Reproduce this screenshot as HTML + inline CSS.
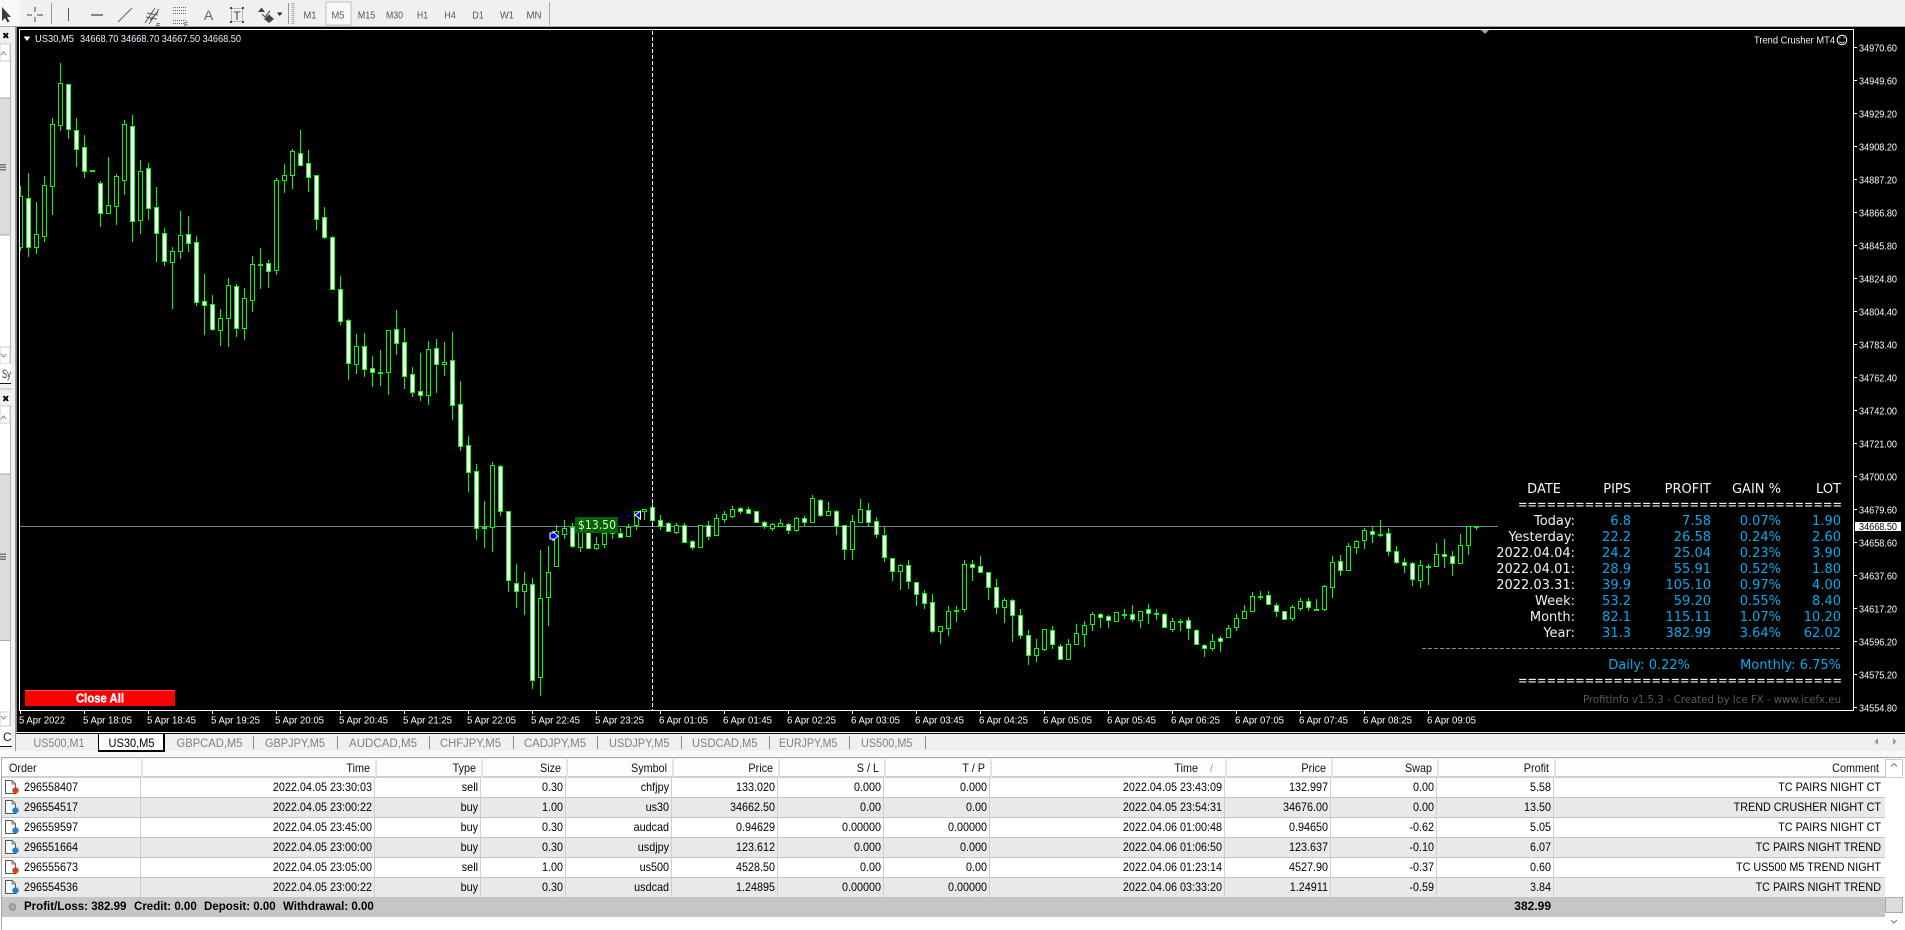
<!DOCTYPE html>
<html><head><meta charset="utf-8"><title>MT4</title>
<style>
html,body{margin:0;padding:0;background:#fff;width:1905px;height:930px;overflow:hidden}
body{position:relative;font-family:"Liberation Sans",Arial,sans-serif}
svg{position:absolute;left:0;top:0}
svg text{font-family:"Liberation Sans",Arial,sans-serif}
.p text{font-family:"DejaVu Sans",Verdana,sans-serif;font-size:13px}
.r{position:absolute;left:2px;width:1883px;height:20px;box-sizing:border-box;border-bottom:1px solid #c4c4c4;font-size:12px;color:#000}
.r.o{background:#e9e9e9}
.r i{position:absolute;top:0;height:19px;width:1px;background:#cfcfcf}
.r b{position:absolute;top:0;font-weight:400;line-height:19px;white-space:nowrap;text-align:right;left:0;transform:scaleX(.9);transform-origin:100% 50%}
.h{top:759px;height:19px;background:#fdfdfd;border-bottom:2px solid #d0d0d0;color:#111}
.h i{width:2px;background:#e4e4e4;height:18px}
.c0{left:22px!important;text-align:left!important;transform-origin:0 50%!important}
.c1{width:370px}.c2{width:476px}.c3{width:561px}.c4{width:667px}.c5{width:773px}.c6{width:879px}.c7{width:985px}.c8{width:1220px}.c9{width:1326px}.c10{width:1432px}.c11{width:1549px}.c12{width:1879px}
.h b{margin-left:-2px}
.h .c0{left:6.5px!important;margin-left:0}
.t b{font-weight:700;text-align:left;transform:scaleX(.96);transform-origin:0 50%}
</style></head><body>
<svg width="1905" height="930" viewBox="0 0 1905 930" shape-rendering="crispEdges">
<rect width="1905" height="27" fill="#f0f0f0"/>
<rect y="26" width="1905" height="1" fill="#a8a8a8"/>
<rect x="0" y="0" width="20" height="26" fill="#f8f8f8"/>
<rect x="326" y="2" width="25" height="23" fill="#f9f9f9" stroke="#c0c0c0"/>
<g shape-rendering="auto">
<path d="M2 7L2 21L5 18L7.5 22.5L9.5 21.5L7 17L11 17Z" fill="#3c3c3c"/>
<g shape-rendering="crispEdges"><path d="M27 15H32M37 15H43M35 7V12M35 17V22" stroke="#444" fill="none"/></g>
<path d="M51.5 3V24" stroke="#999"/>
<path d="M68.5 8V21" stroke="#555"/>
<path d="M91 15H103" stroke="#444" stroke-width="1.2"/>
<path d="M118 22L132 8" stroke="#777" stroke-width="1.2"/>
<path d="M145 23L155 8M149 24L159 9M146 17L157 19M147 13L158 15M150 20L158 12" stroke="#555" fill="none"/>
<text x="156" y="28" font-size="7" fill="#444">E</text>
<path d="M173 7.5H187M173 10.5H187M173 13.5H187M173 20.5H187M173 23.5H184" stroke="#666" stroke-dasharray="1 1" fill="none"/>
<text x="184" y="27" font-size="7" fill="#444">F</text>
<text x="208.5" y="20" font-size="14" fill="#666" text-anchor="middle">A</text>
<rect x="231.5" y="8.5" width="11" height="13" fill="none" stroke="#777" stroke-dasharray="1 1"/>
<path d="M230 7h2v2h-2zM242 7h2v2h-2zM230 21h2v2h-2zM242 21h2v2h-2z" fill="#444"/>
<text x="237" y="20" font-size="12" fill="#444" text-anchor="middle">T</text>
<path d="M258 12L261.5 7.500L265 12Z" fill="#444"/>
<path d="M262 14L265 17L270 11" stroke="#555" fill="none" stroke-width="1.2"/>
<path d="M264 21L269 16.500L274 21L269 25Z" fill="#444" transform="translate(0,-2)"/>
<path d="M277 12.500H282.500L279.700 16Z" fill="#222"/>
<path d="M288.500 3V24" stroke="#999"/>
<path d="M293 3V24" stroke="#aaa" stroke-width="3" stroke-dasharray="1 1"/>
<path d="M549.500 2V25" stroke="#aaa"/>
</g>
<g fill="#555" font-size="10.5" text-anchor="middle" lengthAdjust="spacingAndGlyphs" shape-rendering="auto">
<text x="310" y="18.500" textLength="13" lengthAdjust="spacingAndGlyphs">M1</text>
<text x="338" y="18.500" textLength="13" lengthAdjust="spacingAndGlyphs">M5</text>
<text x="366.500" y="18.500" textLength="17.500" lengthAdjust="spacingAndGlyphs">M15</text>
<text x="394.500" y="18.500" textLength="17" lengthAdjust="spacingAndGlyphs">M30</text>
<text x="422.500" y="18.500" textLength="11" lengthAdjust="spacingAndGlyphs">H1</text>
<text x="450" y="18.500" textLength="11.500" lengthAdjust="spacingAndGlyphs">H4</text>
<text x="478" y="18.500" textLength="11.500" lengthAdjust="spacingAndGlyphs">D1</text>
<text x="507" y="18.500" textLength="14" lengthAdjust="spacingAndGlyphs">W1</text>
<text x="534" y="18.500" textLength="15" lengthAdjust="spacingAndGlyphs">MN</text>
</g>

<!-- sidebar -->
<rect y="27" width="17" height="723" fill="#f0f0f0"/>
<rect x="0" y="44" width="10" height="320" fill="#fff"/>
<rect x="10" y="44" width="1" height="320" fill="#b5b5b5"/>
<rect x="0" y="44" width="10" height="17" fill="#fff" stroke="#ccc" stroke-width="1"/>
<rect x="0" y="98" width="10" height="137" fill="#dcdcdc"/>
<path d="M0 98H10M0 235H10" stroke="#aaa"/>
<path d="M0 164.500H6M0 167H6M0 169.500H6" stroke="#777" stroke-width="1.500"/>
<rect x="0" y="347" width="10" height="17" fill="#fff" stroke="#ccc"/>
<path d="M1 55L3.500 52L6 55" stroke="#888" fill="none"/>
<path d="M1 354L3.500 357L6 354" stroke="#888" fill="none"/>
<path d="M3.500 33L8 38M8 33L3.500 38" stroke="#111" stroke-width="2"/>
<rect x="0" y="364" width="11" height="19" fill="#fff"/>
<text x="2" y="378" font-size="12" fill="#335" textLength="9" lengthAdjust="spacingAndGlyphs" shape-rendering="auto">Sy</text>
<rect x="0" y="383" width="11" height="1" fill="#111"/>
<path d="M0 389H12" stroke="#bbb"/>
<path d="M3.500 396L8 401M8 396L3.500 401" stroke="#111" stroke-width="2"/>
<path d="M0 406H12" stroke="#bbb"/>
<rect x="0" y="406" width="10" height="320" fill="#fff"/>
<rect x="10" y="406" width="1" height="320" fill="#b5b5b5"/>
<rect x="0" y="406" width="10" height="17" fill="#fff" stroke="#ccc"/>
<path d="M1 419L3.500 416L6 419" stroke="#888" fill="none"/>
<rect x="0" y="474" width="10" height="167" fill="#dcdcdc"/>
<path d="M0 474H10M0 640.500H10" stroke="#aaa"/>
<path d="M0 554H6M0 556.500H6M0 559H6" stroke="#777" stroke-width="1.500"/>
<rect x="0" y="712" width="10" height="14" fill="#fff" stroke="#ccc"/>
<path d="M1 716L3.500 719L6 716" stroke="#888" fill="none"/>
<rect x="0" y="727" width="11" height="20" fill="#fff"/>
<text x="3" y="741" font-size="12" fill="#222" shape-rendering="auto">C</text>
<rect x="0" y="746" width="12" height="1" fill="#111"/>
<rect x="15" y="27" width="1" height="725" fill="#999"/>

<!-- chart -->
<rect x="16" y="27" width="1889" height="707" fill="#000"/>
<rect y="27" x="16" width="1" height="707" fill="#888"/>
<rect x="19" y="29" width="1835" height="682" fill="#fff"/>
<rect x="20" y="30" width="1833" height="680" fill="#000"/>
<rect x="16" y="732" width="1889" height="1" fill="#fff"/>
<clipPath id="cp"><rect x="20" y="30" width="1478" height="680"/></clipPath>
<rect x="20" y="526" width="1478" height="1" fill="#708090"/>
<g id="cs" clip-path="url(#cp)"><path id="w" fill="#00ff00"/><path id="f" fill="#fff"/><path id="k" fill="#000"/></g>
<path d="M652.500 31V710" stroke="#fff" stroke-dasharray="4 2" fill="none"/>
<path d="M1481 30H1489L1485 34Z" fill="#8aa0c0" shape-rendering="auto"/>

<!-- price axis -->
<path id="ticks" fill="#fff" d="M1854 47h3v1h-3zM1854 80h3v1h-3zM1854 113h3v1h-3zM1854 146h3v1h-3zM1854 179h3v1h-3zM1854 212h3v1h-3zM1854 245h3v1h-3zM1854 278h3v1h-3zM1854 311h3v1h-3zM1854 344h3v1h-3zM1854 377h3v1h-3zM1854 410h3v1h-3zM1854 443h3v1h-3zM1854 476h3v1h-3zM1854 509h3v1h-3zM1854 542h3v1h-3zM1854 575h3v1h-3zM1854 608h3v1h-3zM1854 641h3v1h-3zM1854 674h3v1h-3zM1854 707h3v1h-3zM20 710h1v4h-1zM84 710h1v4h-1zM148 710h1v4h-1zM212 710h1v4h-1zM276 710h1v4h-1zM340 710h1v4h-1zM404 710h1v4h-1zM468 710h1v4h-1zM532 710h1v4h-1zM596 710h1v4h-1zM660 710h1v4h-1zM724 710h1v4h-1zM788 710h1v4h-1zM852 710h1v4h-1zM916 710h1v4h-1zM980 710h1v4h-1zM1044 710h1v4h-1zM1108 710h1v4h-1zM1172 710h1v4h-1zM1236 710h1v4h-1zM1300 710h1v4h-1zM1364 710h1v4h-1zM1428 710h1v4h-1z"/>
<g fill="#fff" font-size="10.500" shape-rendering="auto">
<text x="1859" y="51.500" textLength="38" lengthAdjust="spacingAndGlyphs">34970.60</text>
<text x="1859" y="84.500" textLength="38" lengthAdjust="spacingAndGlyphs">34949.60</text>
<text x="1859" y="117.500" textLength="38" lengthAdjust="spacingAndGlyphs">34929.20</text>
<text x="1859" y="150.500" textLength="38" lengthAdjust="spacingAndGlyphs">34908.20</text>
<text x="1859" y="183.500" textLength="38" lengthAdjust="spacingAndGlyphs">34887.20</text>
<text x="1859" y="216.500" textLength="38" lengthAdjust="spacingAndGlyphs">34866.80</text>
<text x="1859" y="249.500" textLength="38" lengthAdjust="spacingAndGlyphs">34845.80</text>
<text x="1859" y="282.500" textLength="38" lengthAdjust="spacingAndGlyphs">34824.80</text>
<text x="1859" y="315.500" textLength="38" lengthAdjust="spacingAndGlyphs">34804.40</text>
<text x="1859" y="348.500" textLength="38" lengthAdjust="spacingAndGlyphs">34783.40</text>
<text x="1859" y="381.500" textLength="38" lengthAdjust="spacingAndGlyphs">34762.40</text>
<text x="1859" y="414.500" textLength="38" lengthAdjust="spacingAndGlyphs">34742.00</text>
<text x="1859" y="447.500" textLength="38" lengthAdjust="spacingAndGlyphs">34721.00</text>
<text x="1859" y="480.500" textLength="38" lengthAdjust="spacingAndGlyphs">34700.00</text>
<text x="1859" y="513.500" textLength="38" lengthAdjust="spacingAndGlyphs">34679.60</text>
<text x="1859" y="546.500" textLength="38" lengthAdjust="spacingAndGlyphs">34658.60</text>
<text x="1859" y="579.500" textLength="38" lengthAdjust="spacingAndGlyphs">34637.60</text>
<text x="1859" y="612.500" textLength="38" lengthAdjust="spacingAndGlyphs">34617.20</text>
<text x="1859" y="645.500" textLength="38" lengthAdjust="spacingAndGlyphs">34596.20</text>
<text x="1859" y="678.500" textLength="38" lengthAdjust="spacingAndGlyphs">34575.20</text>
<text x="1859" y="711.500" textLength="38" lengthAdjust="spacingAndGlyphs">34554.80</text>
</g>
<rect x="1855" y="522" width="46" height="9" fill="#fff"/>
<text x="1859" y="530" font-size="10.500" fill="#000" textLength="38" lengthAdjust="spacingAndGlyphs" shape-rendering="auto">34668.50</text>

<!-- time axis -->
<g fill="#fff" font-size="10.500" shape-rendering="auto">
<text x="19" y="723.500" textLength="46" lengthAdjust="spacingAndGlyphs">5 Apr 2022</text>
<text x="83" y="723.500" textLength="49" lengthAdjust="spacingAndGlyphs">5 Apr 18:05</text>
<text x="147" y="723.500" textLength="49" lengthAdjust="spacingAndGlyphs">5 Apr 18:45</text>
<text x="211" y="723.500" textLength="49" lengthAdjust="spacingAndGlyphs">5 Apr 19:25</text>
<text x="275" y="723.500" textLength="49" lengthAdjust="spacingAndGlyphs">5 Apr 20:05</text>
<text x="339" y="723.500" textLength="49" lengthAdjust="spacingAndGlyphs">5 Apr 20:45</text>
<text x="403" y="723.500" textLength="49" lengthAdjust="spacingAndGlyphs">5 Apr 21:25</text>
<text x="467" y="723.500" textLength="49" lengthAdjust="spacingAndGlyphs">5 Apr 22:05</text>
<text x="531" y="723.500" textLength="49" lengthAdjust="spacingAndGlyphs">5 Apr 22:45</text>
<text x="595" y="723.500" textLength="49" lengthAdjust="spacingAndGlyphs">5 Apr 23:25</text>
<text x="659" y="723.500" textLength="49" lengthAdjust="spacingAndGlyphs">6 Apr 01:05</text>
<text x="723" y="723.500" textLength="49" lengthAdjust="spacingAndGlyphs">6 Apr 01:45</text>
<text x="787" y="723.500" textLength="49" lengthAdjust="spacingAndGlyphs">6 Apr 02:25</text>
<text x="851" y="723.500" textLength="49" lengthAdjust="spacingAndGlyphs">6 Apr 03:05</text>
<text x="915" y="723.500" textLength="49" lengthAdjust="spacingAndGlyphs">6 Apr 03:45</text>
<text x="979" y="723.500" textLength="49" lengthAdjust="spacingAndGlyphs">6 Apr 04:25</text>
<text x="1043" y="723.500" textLength="49" lengthAdjust="spacingAndGlyphs">6 Apr 05:05</text>
<text x="1107" y="723.500" textLength="49" lengthAdjust="spacingAndGlyphs">6 Apr 05:45</text>
<text x="1171" y="723.500" textLength="49" lengthAdjust="spacingAndGlyphs">6 Apr 06:25</text>
<text x="1235" y="723.500" textLength="49" lengthAdjust="spacingAndGlyphs">6 Apr 07:05</text>
<text x="1299" y="723.500" textLength="49" lengthAdjust="spacingAndGlyphs">6 Apr 07:45</text>
<text x="1363" y="723.500" textLength="49" lengthAdjust="spacingAndGlyphs">6 Apr 08:25</text>
<text x="1427" y="723.500" textLength="49" lengthAdjust="spacingAndGlyphs">6 Apr 09:05</text>
</g>

<!-- chart header -->
<path d="M23.500 36.500H30.500L27 41Z" fill="#fff" shape-rendering="auto"/>
<g fill="#eaf4ff" font-size="10.500" shape-rendering="auto">
<text x="35" y="42" textLength="39" lengthAdjust="spacingAndGlyphs">US30,M5</text>
<text x="80" y="42" textLength="161" lengthAdjust="spacingAndGlyphs">34668.70 34668.70 34667.50 34668.50</text>
<text x="1754" y="43.500" textLength="81" lengthAdjust="spacingAndGlyphs">Trend Crusher MT4</text>
</g>
<g fill="none" stroke="#fff" shape-rendering="auto"><circle cx="1842" cy="40" r="4.800"/><path d="M1839.500 41.500Q1842 44.500 1844.500 41.500" stroke-width=".9"/></g>
<rect x="1839.500" y="37.500" width="1.200" height="1.200" fill="#fff"/><rect x="1843.300" y="37.500" width="1.200" height="1.200" fill="#fff"/>

<!-- trade marks -->
<path d="M557 535L635 514" stroke="#0000ff" stroke-dasharray="4 5" shape-rendering="auto"/>
<rect x="575" y="517" width="43" height="16" fill="#006400"/>
<text x="578" y="529" font-size="12.500" fill="#e6ecd8" textLength="38" lengthAdjust="spacingAndGlyphs" style="font-family:'DejaVu Sans',sans-serif" shape-rendering="auto">$13.50</text>
<path d="M550 533H553V531.500L558 536L553 540.500V539H550Z" fill="#0000ff" stroke="#fff" stroke-width="1" shape-rendering="auto"/>
<path d="M640.500 511V519L635 515Z" fill="#0000ff" stroke="#fff" stroke-width="1" shape-rendering="auto"/>

<!-- close all -->
<rect x="25" y="690" width="150" height="16" fill="#ff0000"/>
<rect x="25" y="690" width="150" height="1" fill="#ff5050"/>
<text x="76" y="702.500" font-size="12.500" font-weight="700" fill="#fff" stroke="#fff" stroke-width=".35" textLength="48" lengthAdjust="spacingAndGlyphs" shape-rendering="auto">Close All</text>

<!-- profit panel -->
<g class="p" shape-rendering="auto" text-anchor="end">
<g fill="#f4f4f4">
<text x="1561" y="493">DATE</text><text x="1631" y="493">PIPS</text><text x="1711" y="493">PROFIT</text><text x="1781" y="493">GAIN %</text><text x="1841" y="493">LOT</text>
<text x="1842" y="509" textLength="324" lengthAdjust="spacingAndGlyphs">==================================</text>
<text x="1575" y="525">Today:</text><text x="1575" y="541">Yesterday:</text><text x="1575" y="557">2022.04.04:</text><text x="1575" y="573">2022.04.01:</text><text x="1575" y="589">2022.03.31:</text><text x="1575" y="605">Week:</text><text x="1575" y="621">Month:</text><text x="1575" y="637">Year:</text>
<text x="1842" y="685" textLength="324" lengthAdjust="spacingAndGlyphs">==================================</text>
</g>
<g fill="#00aeef">
<text x="1631" y="525">6.8</text><text x="1711" y="525">7.58</text><text x="1781" y="525">0.07%</text><text x="1841" y="525">1.90</text>
<text x="1631" y="541">22.2</text><text x="1711" y="541">26.58</text><text x="1781" y="541">0.24%</text><text x="1841" y="541">2.60</text>
<text x="1631" y="557">24.2</text><text x="1711" y="557">25.04</text><text x="1781" y="557">0.23%</text><text x="1841" y="557">3.90</text>
<text x="1631" y="573">28.9</text><text x="1711" y="573">55.91</text><text x="1781" y="573">0.52%</text><text x="1841" y="573">1.80</text>
<text x="1631" y="589">39.9</text><text x="1711" y="589">105.10</text><text x="1781" y="589">0.97%</text><text x="1841" y="589">4.00</text>
<text x="1631" y="605">53.2</text><text x="1711" y="605">59.20</text><text x="1781" y="605">0.55%</text><text x="1841" y="605">8.40</text>
<text x="1631" y="621">82.1</text><text x="1711" y="621">115.11</text><text x="1781" y="621">1.07%</text><text x="1841" y="621">10.20</text>
<text x="1631" y="637">31.3</text><text x="1711" y="637">382.99</text><text x="1781" y="637">3.64%</text><text x="1841" y="637">62.02</text>
<text x="1690" y="669">Daily: 0.22%</text><text x="1841" y="669">Monthly: 6.75%</text>
</g>
<text x="1841" y="703" fill="#5a5a5a" style="font-size:11px" textLength="258" lengthAdjust="spacingAndGlyphs">ProfitInfo v1.5.3 - Created by Ice FX - www.icefx.eu</text>
</g>
<path d="M1422 648.500H1840" stroke="#888" stroke-dasharray="4 2"/>

<!-- tabs -->
<rect x="16" y="734" width="1889" height="17" fill="#f0f0f0"/>
<rect x="2" y="751" width="1903" height="6" fill="#f8f8f8"/>
<rect x="98" y="733" width="67" height="19" fill="#000"/>
<rect x="99" y="734" width="64" height="16" fill="#fff"/>
<g fill="#808080" font-size="12" shape-rendering="auto">
<text x="33.500" y="747" textLength="51" lengthAdjust="spacingAndGlyphs">US500,M1</text>
<text x="108.500" y="747" textLength="46" lengthAdjust="spacingAndGlyphs" fill="#000">US30,M5</text>
<text x="176.500" y="747" textLength="66" lengthAdjust="spacingAndGlyphs">GBPCAD,M5</text>
<text x="265" y="747" textLength="60" lengthAdjust="spacingAndGlyphs">GBPJPY,M5</text>
<text x="349" y="747" textLength="68" lengthAdjust="spacingAndGlyphs">AUDCAD,M5</text>
<text x="440" y="747" textLength="61" lengthAdjust="spacingAndGlyphs">CHFJPY,M5</text>
<text x="524" y="747" textLength="62" lengthAdjust="spacingAndGlyphs">CADJPY,M5</text>
<text x="609" y="747" textLength="60.500" lengthAdjust="spacingAndGlyphs">USDJPY,M5</text>
<text x="692" y="747" textLength="65.500" lengthAdjust="spacingAndGlyphs">USDCAD,M5</text>
<text x="779" y="747" textLength="58.500" lengthAdjust="spacingAndGlyphs">EURJPY,M5</text>
<text x="861" y="747" textLength="51.500" lengthAdjust="spacingAndGlyphs">US500,M5</text>
</g>
<path d="M253.500 736V749M337.500 736V749M429.500 736V749M513.500 736V749M597.500 736V749M681.500 736V749M769.500 736V749M849.500 736V749M925.500 736V749" stroke="#8c8c8c"/>
<path d="M1878 738V745L1874.500 741.500ZM1893 738V745L1896.500 741.500Z" fill="#9a9a9a" shape-rendering="auto"/>

<!-- table frame -->
<rect x="2" y="757" width="1903" height="1" fill="#a8a8a8"/>
<rect x="1" y="757" width="1" height="173" fill="#a8a8a8"/>
<rect x="2" y="758" width="1883" height="1" fill="#f4f4f4"/>
<rect x="1885" y="758" width="20" height="172" fill="#fff"/>
<rect x="1885.500" y="759.500" width="17" height="18" fill="#fff" stroke="#ccc"/>
<path d="M1891 766.500L1894 763.500L1897 766.500" stroke="#777" fill="none" shape-rendering="auto"/>
<rect x="1885.500" y="897.500" width="17" height="15" fill="#dcdcdc" stroke="#aaa"/>
<path d="M1891 920L1894 923L1897 920" stroke="#777" fill="none" shape-rendering="auto"/>
</svg>

<div class="r h"><i style="left:139px"></i><i style="left:373px"></i><i style="left:479px"></i><i style="left:564px"></i><i style="left:670px"></i><i style="left:776px"></i><i style="left:882px"></i><i style="left:988px"></i><i style="left:1223px"></i><i style="left:1329px"></i><i style="left:1435px"></i><i style="left:1552px"></i>
<b class="c0">Order</b><b class="c1">Time</b><b class="c2">Type</b><b class="c3">Size</b><b class="c4">Symbol</b><b class="c5">Price</b><b class="c6">S / L</b><b class="c7">T / P</b><b style="width:1198px">Time</b><b style="width:1213px;color:#999">/</b><b class="c9">Price</b><b class="c10">Swap</b><b class="c11">Profit</b><b class="c12">Comment</b></div>

<div class="r" style="top:778px"><i style="left:138px"></i><i style="left:372px"></i><i style="left:478px"></i><i style="left:563px"></i><i style="left:669px"></i><i style="left:775px"></i><i style="left:881px"></i><i style="left:987px"></i><i style="left:1222px"></i><i style="left:1328px"></i><i style="left:1434px"></i><i style="left:1551px"></i>
<b class="c0">296558407</b><b class="c1">2022.04.05 23:30:03</b><b class="c2">sell</b><b class="c3">0.30</b><b class="c4">chfjpy</b><b class="c5">133.020</b><b class="c6">0.000</b><b class="c7">0.000</b><b class="c8">2022.04.05 23:43:09</b><b class="c9">132.997</b><b class="c10">0.00</b><b class="c11">5.58</b><b class="c12">TC PAIRS NIGHT CT</b></div>

<div class="r o" style="top:798px"><i style="left:138px"></i><i style="left:372px"></i><i style="left:478px"></i><i style="left:563px"></i><i style="left:669px"></i><i style="left:775px"></i><i style="left:881px"></i><i style="left:987px"></i><i style="left:1222px"></i><i style="left:1328px"></i><i style="left:1434px"></i><i style="left:1551px"></i>
<b class="c0">296554517</b><b class="c1">2022.04.05 23:00:22</b><b class="c2">buy</b><b class="c3">1.00</b><b class="c4">us30</b><b class="c5">34662.50</b><b class="c6">0.00</b><b class="c7">0.00</b><b class="c8">2022.04.05 23:54:31</b><b class="c9">34676.00</b><b class="c10">0.00</b><b class="c11">13.50</b><b class="c12">TREND CRUSHER NIGHT CT</b></div>

<div class="r" style="top:818px"><i style="left:138px"></i><i style="left:372px"></i><i style="left:478px"></i><i style="left:563px"></i><i style="left:669px"></i><i style="left:775px"></i><i style="left:881px"></i><i style="left:987px"></i><i style="left:1222px"></i><i style="left:1328px"></i><i style="left:1434px"></i><i style="left:1551px"></i>
<b class="c0">296559597</b><b class="c1">2022.04.05 23:45:00</b><b class="c2">buy</b><b class="c3">0.30</b><b class="c4">audcad</b><b class="c5">0.94629</b><b class="c6">0.00000</b><b class="c7">0.00000</b><b class="c8">2022.04.06 01:00:48</b><b class="c9">0.94650</b><b class="c10">-0.62</b><b class="c11">5.05</b><b class="c12">TC PAIRS NIGHT CT</b></div>

<div class="r o" style="top:838px"><i style="left:138px"></i><i style="left:372px"></i><i style="left:478px"></i><i style="left:563px"></i><i style="left:669px"></i><i style="left:775px"></i><i style="left:881px"></i><i style="left:987px"></i><i style="left:1222px"></i><i style="left:1328px"></i><i style="left:1434px"></i><i style="left:1551px"></i>
<b class="c0">296551664</b><b class="c1">2022.04.05 23:00:00</b><b class="c2">buy</b><b class="c3">0.30</b><b class="c4">usdjpy</b><b class="c5">123.612</b><b class="c6">0.000</b><b class="c7">0.000</b><b class="c8">2022.04.06 01:06:50</b><b class="c9">123.637</b><b class="c10">-0.10</b><b class="c11">6.07</b><b class="c12">TC PAIRS NIGHT TREND</b></div>

<div class="r" style="top:858px"><i style="left:138px"></i><i style="left:372px"></i><i style="left:478px"></i><i style="left:563px"></i><i style="left:669px"></i><i style="left:775px"></i><i style="left:881px"></i><i style="left:987px"></i><i style="left:1222px"></i><i style="left:1328px"></i><i style="left:1434px"></i><i style="left:1551px"></i>
<b class="c0">296555673</b><b class="c1">2022.04.05 23:05:00</b><b class="c2">sell</b><b class="c3">1.00</b><b class="c4">us500</b><b class="c5">4528.50</b><b class="c6">0.00</b><b class="c7">0.00</b><b class="c8">2022.04.06 01:23:14</b><b class="c9">4527.90</b><b class="c10">-0.37</b><b class="c11">0.60</b><b class="c12">TC US500 M5 TREND NIGHT</b></div>

<div class="r o" style="top:878px;border-bottom:0"><i style="left:138px"></i><i style="left:372px"></i><i style="left:478px"></i><i style="left:563px"></i><i style="left:669px"></i><i style="left:775px"></i><i style="left:881px"></i><i style="left:987px"></i><i style="left:1222px"></i><i style="left:1328px"></i><i style="left:1434px"></i><i style="left:1551px"></i>
<b class="c0">296554536</b><b class="c1">2022.04.05 23:00:22</b><b class="c2">buy</b><b class="c3">0.30</b><b class="c4">usdcad</b><b class="c5">1.24895</b><b class="c6">0.00000</b><b class="c7">0.00000</b><b class="c8">2022.04.06 03:33:20</b><b class="c9">1.24911</b><b class="c10">-0.59</b><b class="c11">3.84</b><b class="c12">TC PAIRS NIGHT TREND</b></div>

<div class="r t" style="top:897px;background:#c6c6c6;border:0">
<b style="left:22px">Profit/Loss: 382.99</b>
<b style="left:132px">Credit: 0.00</b>
<b style="left:202px">Deposit: 0.00</b>
<b style="left:281px">Withdrawal: 0.00</b>
<b class="c11" style="text-align:right;transform:none">382.99</b></div>

<svg width="1905" height="930" viewBox="0 0 1905 930" style="pointer-events:none">
<defs>
<g id="doc"><path d="M5.500 3.500H12L15.500 7V16.500H5.500Z" fill="#fff" stroke="#555"/><path d="M12 3.500V7H15.500" fill="none" stroke="#777"/></g>
</defs>
<g transform="translate(0,777)"><use href="#doc"/><circle cx="15.500" cy="13.500" r="3.200" fill="#d9430e"/></g>
<g transform="translate(0,797)"><use href="#doc"/><circle cx="15.500" cy="13.500" r="3.200" fill="#1f80d4"/></g>
<g transform="translate(0,817)"><use href="#doc"/><circle cx="15.500" cy="13.500" r="3.200" fill="#1f80d4"/></g>
<g transform="translate(0,837)"><use href="#doc"/><circle cx="15.500" cy="13.500" r="3.200" fill="#1f80d4"/></g>
<g transform="translate(0,857)"><use href="#doc"/><circle cx="15.500" cy="13.500" r="3.200" fill="#d9430e"/></g>
<g transform="translate(0,877)"><use href="#doc"/><circle cx="15.500" cy="13.500" r="3.200" fill="#1f80d4"/></g>
<circle cx="12.500" cy="907" r="3.300" fill="#a8a8a8" stroke="#888"/>
</svg>

<script>
(function(){
var A=[[468,498,650,660,0],[430,505,650,678,1],[516,613,650,669,0],[438,466,617,633,0],[264,283,467,552,0],[99,160,285,300,0],[163,163,296,324,1],[264,301,358,408,1],[315,352,422,441,1],[420,420,420,420,0],[453,460,550,588,1],[381,526,550,550,0],[432,439,527,582,0],[270,283,449,492,0],[255,289,572,633,1],[390,424,569,609,0],[399,415,533,567,1],[471,532,610,693,1],[594,610,692,705,1],[651,664,695,833,0],[544,616,662,684,0],[558,613,638,663,1],[618,637,815,825,1],[732,814,824,912,1],[796,823,896,900,1],[837,865,899,945,0],[744,766,863,948,0],[763,767,893,918,1],[774,805,893,927,0],[678,703,809,843,0],[654,702,702,774,0],[690,700,722,771,1],[444,451,719,732,0],[402,436,449,486,0],[358,364,434,474,0],[300,370,404,404,1],[360,400,440,483,1],[436,436,566,597,1],[531,562,620,624,1],[618,622,778,778,1],[738,778,872,882,1]];
var B=[[27,30,160,207,1],[72,109,161,189,0],[69,109,176,198,1],[138,175,185,228,1],[120,187,187,225,0],[60,61,185,252,0],[0,58,98,132,1],[54,97,197,234,1],[171,193,245,258,1],[129,244,254,270,1],[93,118,254,282,0],[87,115,161,246,1],[96,157,163,195,0],[66,151,284,327,1],[213,283,407,420,1],[378,406,485,543,1],[462,484,653,687,1],[573,651,651,711,0],[456,466,650,723,0],[465,469,602,615,1]];
var C=[[124,124,329,363,1],[282,340,362,410,1],[306,343,362,432,0],[324,343,629,654,1],[240,385,620,675,0],[228,307,380,465,0],[165,184,287,287,0],[150,175,191,204,0],[160,172,227,231,1],[160,170,231,243,0],[165,172,233,233,1],[201,223,233,237,0],[165,190,221,231,0],[155,165,190,204,0],[174,190,200,200,1],[162,171,197,197,0],[122,124,164,177,0],[118,118,124,148,0],[90,112,149,165,1],[135,151,167,177,1],[155,160,182,184,1],[160,166,185,190,0],[159,166,215,215,1],[210,212,230,237,1],[165,166,231,231,0],[154,166,197,207,1],[132,145,194,194,0],[124,133,146,156,0],[108,118,137,141,0],[111,115,122,129,1],[111,118,128,128,1],[124,124,155,155,1],[153,157,169,174,1],[160,163,173,179,0],[147,160,167,167,0],[160,163,179,189,1],[141,145,179,182,0],[138,145,155,166,1],[75,85,155,155,0],[87,91,134,138,1],[96,124,134,134,0],[120,124,167,192,1],[166,166,236,267,1],[136,154,236,267,0],[87,118,155,155,0],[99,121,155,168,1],[141,154,191,201,1],[170,196,260,272,1],[265,265,302,330,1],[283,286,304,357,0],[270,286,332,354,1],[337,337,371,405,1],[360,370,398,414,1],[373,397,482,485,1],[469,469,482,519,0],[408,424,473,495,0],[408,420,420,453,0],[270,283,417,423,0],[270,281,292,330,1]];
var D=[[258,289,307,307,1],[307,307,352,386,1],[327,352,412,429,1],[385,391,412,456,0],[388,391,436,513,1],[417,436,496,503,1],[481,496,556,581,1],[507,535,556,572,0],[477,478,536,541,0],[468,481,523,533,1],[522,529,568,568,1],[507,523,568,568,0],[462,490,523,523,0],[453,466,493,528,0],[426,433,463,480,0],[430,433,442,471,1],[436,439,451,471,1],[426,427,452,454,0],[417,432,432,445,0],[405,433,448,453,1],[423,424,449,471,0],[402,418,430,459,1],[417,428,428,447,0],[430,433,472,472,1],[445,454,476,483,0],[448,452,452,480,0],[442,451,475,507,1],[478,481,523,523,1],[522,524,535,558,1],[492,514,533,540,0],[498,503,512,543,1],[466,475,502,502,0],[433,445,472,480,0],[405,424,445,445,0],[366,379,424,424,0],[363,378,378,386,0],[363,376,403,403,1],[399,406,424,438,1],[424,424,448,448,1],[405,412,445,450,0],[385,394,415,420,0],[385,394,412,420,1],[387,417,417,417,0],[346,349,416,420,0],[258,277,352,381,0],[255,274,301,314,1],[220,229,301,301,0],[210,214,232,249,0],[175,181,211,234,0],[168,184,193,216,1],[150,192,192,198,0],[175,190,244,255,1],[228,244,277,280,1],[265,277,286,305,1],[277,280,328,345,1],[270,286,331,351,0],[283,287,287,342,0],[220,253,289,289,0],[208,253,259,290,1],[243,259,280,315,1],[192,226,280,280,0],[168,169,226,252,0],[168,168,168,176,0]];
var w='',f='',k='',i=0;
function R(x,y,a,b){return 'M'+x+' '+y+'h'+a+'v'+b+'h'+(-a)+'z';}
function add(L,y0){L.forEach(function(c){
 var cx=20+8*i;i++;
 var h=Math.round(y0+c[0]/3),t=Math.round(y0+c[1]/3),b=Math.round(y0+c[2]/3),l=Math.round(y0+c[3]/3);
 if(l>h)w+=R(cx,h,1,l-h+1);
 if(t==b){w+=R(cx-2,t,5,2);return;}
 w+=R(cx-2,t,5,b-t+1);
 if(b-t>1){if(c[4])f+=R(cx-1,t+1,3,b-t-1);else k+=R(cx-1,t+1,3,b-t-1);}
});}
add(A,30);add(B,310);add(C,470);add(D,470);
document.getElementById('w').setAttribute('d',w);
document.getElementById('f').setAttribute('d',f);
document.getElementById('k').setAttribute('d',k);
document.getElementById('cs').setAttribute('shape-rendering','crispEdges');
})();
</script>
</body></html>
